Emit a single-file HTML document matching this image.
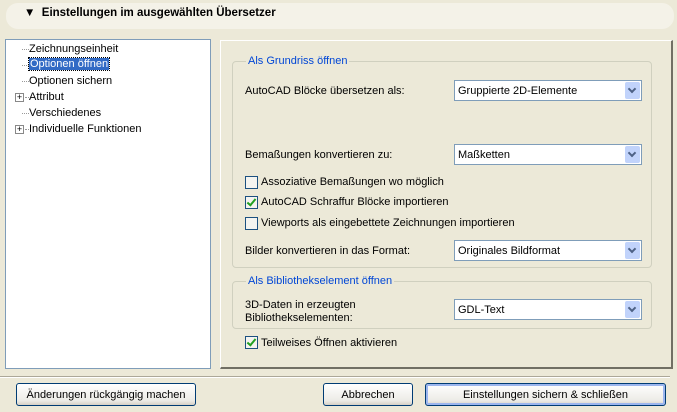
<!DOCTYPE html>
<html><head><meta charset="utf-8"><style>
*{margin:0;padding:0;box-sizing:border-box}
body{width:677px;height:412px;background:#ece9d8;font-family:"Liberation Sans",sans-serif;font-size:11px;color:#000;position:relative;overflow:hidden}
.a{position:absolute;white-space:nowrap}
.hdr{left:6px;top:3px;width:668px;height:26px;background:#f4f2e8;border-radius:12px}
.tree{left:5px;top:39px;width:206px;height:330px;background:#fff;border:1px solid #7f9db9}
.ti{position:absolute;left:23px;font-size:11px}
.dot{position:absolute;left:16px;width:7px;border-top:1px dotted #999}
.plus{position:absolute;left:9px;width:9px;height:9px;border:1px solid #888;background:#fff;font-size:9px;line-height:7px;text-align:center}
.panel{left:220px;top:40px;width:453px;height:329px;border:1px solid #fff;border-right:2px solid #716f64;border-bottom:2px solid #716f64}
.grp{border:1px solid #d0d0bf;border-radius:4px}
.leg{color:#0046d5;background:#ece9d8;padding:0 2px}
.cb{width:188px;height:21px;background:#fff;border:1px solid #7f9db9}
.cb span{position:absolute;left:3px;top:4px}
.cb i{position:absolute;right:1px;top:1px;width:15px;height:17px;background:#c1d3fb;border-radius:2px}
.cb i:after{content:"";position:absolute;left:4px;top:4px;width:4px;height:4px;border-right:2px solid #4d6185;border-bottom:2px solid #4d6185;transform:rotate(45deg)}
.chk{width:13px;height:13px;border:1px solid #1c5180;background:#f4f4f0}
.ck:after{content:"";position:absolute;left:3px;top:0px;width:3px;height:7px;border-right:2px solid #21a121;border-bottom:2px solid #21a121;transform:rotate(40deg)}
.btn{height:23px;border:1px solid #003c74;border-radius:3px;background:linear-gradient(#fff,#ecebe6 80%,#d6d0c5);text-align:center;line-height:22px}
</style></head><body>
<div class="a hdr"></div>
<div class="a" style="left:24px;top:7px;font-size:11.5px;font-weight:bold">&#9660;&nbsp; Einstellungen im ausgewählten Übersetzer</div>

<div class="a tree">
<div class="dot" style="top:9px"></div><div class="ti" style="top:3px">Zeichnungseinheit</div>
<div class="dot" style="top:25px"></div><div class="ti" style="top:18px;background:#316ac5;color:#fff;padding:0 1px;left:23px;outline:1px dotted #000">Optionen öffnen</div>
<div class="dot" style="top:41px"></div><div class="ti" style="top:35px">Optionen sichern</div>
<div class="plus" style="top:53px">+</div><div class="dot" style="top:57px;left:19px;width:4px"></div><div class="ti" style="top:51px">Attribut</div>
<div class="dot" style="top:73px"></div><div class="ti" style="top:67px">Verschiedenes</div>
<div class="plus" style="top:85px">+</div><div class="dot" style="top:89px;left:19px;width:4px"></div><div class="ti" style="top:83px">Individuelle Funktionen</div>
</div>

<div class="a panel"></div>
<div class="a grp" style="left:232px;top:61px;width:420px;height:207px"></div>
<div class="a leg" style="left:246px;top:55px">Als Grundriss öffnen</div>
<div class="a" style="left:245px;top:85px">AutoCAD Blöcke übersetzen als:</div>
<div class="a cb" style="left:454px;top:80px"><span>Gruppierte 2D-Elemente</span><i></i></div>
<div class="a" style="left:245px;top:149px">Bemaßungen konvertieren zu:</div>
<div class="a cb" style="left:454px;top:144px"><span>Maßketten</span><i></i></div>
<div class="a chk" style="left:245px;top:176px"></div><div class="a" style="left:261px;top:176px">Assoziative Bemaßungen wo möglich</div>
<div class="a chk ck" style="left:245px;top:196px"></div><div class="a" style="left:261px;top:196px">AutoCAD Schraffur Blöcke importieren</div>
<div class="a chk" style="left:245px;top:217px"></div><div class="a" style="left:261px;top:217px">Viewports als eingebettete Zeichnungen importieren</div>
<div class="a" style="left:245px;top:245px">Bilder konvertieren in das Format:</div>
<div class="a cb" style="left:454px;top:240px"><span>Originales Bildformat</span><i></i></div>

<div class="a grp" style="left:232px;top:281px;width:420px;height:48px"></div>
<div class="a leg" style="left:246px;top:275px">Als Bibliothekselement öffnen</div>
<div class="a" style="left:245px;top:299px;line-height:13px">3D-Daten in erzeugten<br>Bibliothekselementen:</div>
<div class="a cb" style="left:454px;top:299px"><span>GDL-Text</span><i></i></div>
<div class="a chk ck" style="left:245px;top:336px"></div><div class="a" style="left:261px;top:337px">Teilweises Öffnen aktivieren</div>

<div class="a" style="left:0;top:376px;width:670px;border-top:1px solid #aca899;border-bottom:1px solid #fff"></div>
<div class="a btn" style="left:16px;top:383px;width:180px">Änderungen rückgängig machen</div>
<div class="a btn" style="left:323px;top:383px;width:90px">Abbrechen</div>
<div class="a btn" style="left:425px;top:383px;width:241px;box-shadow:inset 0 0 0 2px #9cb6ee">Einstellungen sichern &amp; schließen</div>
</body></html>
